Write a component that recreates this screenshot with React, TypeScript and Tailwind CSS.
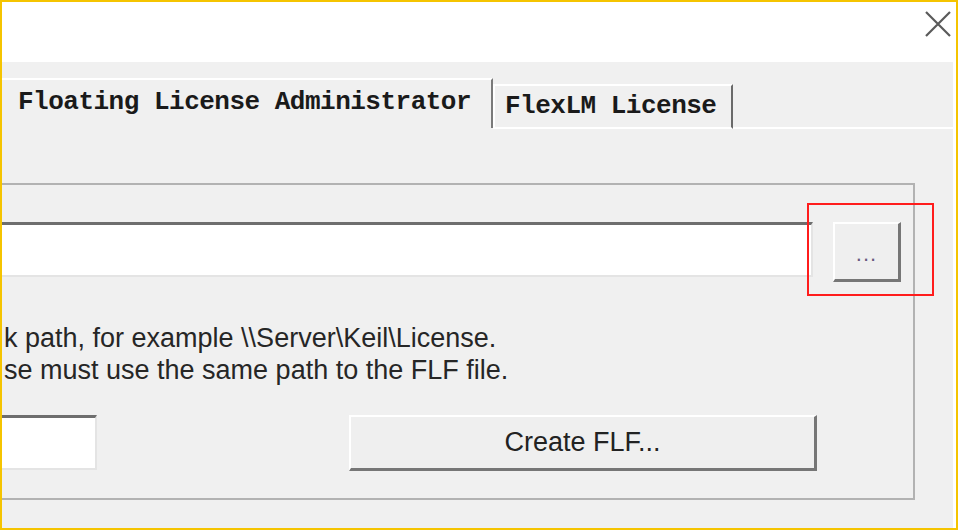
const ui = "font-['Liberation_Sans',Arial,sans-serif]";
const mono = "font-['Liberation_Mono','Courier_New',monospace]";

function CloseIcon() {
  return (
    <svg width="28" height="26" viewBox="0 0 28 26" className="block">
      <path d="M2 1 L26 25 M26 1 L2 25" stroke="#5a5a5a" strokeWidth="2.2" fill="none" />
    </svg>
  );
}

export default function App() {
  return (
    <div className="w-[961px] h-[531px] bg-white">
      <div className="w-[958px] h-[530px] border-2 border-[#f5c400] flex flex-col bg-white">
        {/* title strip */}
        <div className="h-[60px] flex justify-end items-start pt-[9px] pr-[4px]">
          <CloseIcon />
        </div>

        <div className="flex-1 bg-[#f0f0f0] mr-[3px] flex flex-col">
          {/* tabs */}
          <div className="h-[66px] flex items-end">
            <div
              className={`w-[491px] h-[50px] border-t-2 border-t-white border-r-2 border-r-[#7a7a7a] pl-[16px] pt-[7px] ${mono} font-bold text-[26px] leading-[30px] tracking-[-0.5px] text-[#1a1a1a]`}
            >
              Floating License Administrator
            </div>
            <div
              className={`w-[240px] h-[45px] border-t-2 border-l-2 border-white border-r-2 border-r-[#6a6a6a] border-b-2 border-b-white pl-[10px] pt-[5px] ${mono} font-bold text-[26px] leading-[30px] tracking-[-0.5px] text-[#1a1a1a] mb-[-1px]`}
            >
              FlexLM License
            </div>
            <div className="flex-1 h-[2px] bg-white mb-[-1px]" />
          </div>

          {/* group box */}
          <div className="mt-[55px] w-[913px] border-t-2 border-r-2 border-b-2 border-[#b2b2b2] pb-[27px]">
            <div className="mt-[37px] flex items-start">
              <div className="w-[811px] h-[55px] bg-white border-t-[3px] border-t-[#6e6e6e] border-r-2 border-r-[#e4e4e4] border-b-2 border-b-[#e4e4e4]" />
              <div className="relative ml-[20px]">
                <div
                  className={`w-[68px] h-[60px] bg-[#efefef] border-t-2 border-l-2 border-white border-r-[3px] border-b-[3px] border-r-[#767676] border-b-[#767676] flex items-center justify-center pt-[4px] ${ui} text-[22px] text-[#6a5a80] tracking-[1px]`}
                >
                  ...
                </div>
                <div className="absolute left-[-26px] top-[-19px] w-[127px] h-[93px] border-2 border-[#ff1c1c]" />
              </div>
            </div>

            <div className={`mt-[40px] pl-[2px] ${ui} text-[27px] leading-[32px] text-[#262626]`}>
              <div>k path, for example \\Server\Keil\License.</div>
              <div>se must use the same path to the FLF file.</div>
            </div>

            <div className="mt-[29px] flex items-start">
              <div className="w-[95px] h-[55px] bg-white border-t-[3px] border-t-[#6e6e6e] border-r-2 border-r-[#e4e4e4] border-b-2 border-b-[#e4e4e4]" />
              <div
                className={`ml-[252px] w-[468px] h-[56px] bg-[#efefef] border-t-2 border-l-2 border-white border-r-[3px] border-b-[3px] border-r-[#767676] border-b-[#767676] flex items-center justify-center ${ui} text-[27px] text-[#222]`}
              >
                Create FLF...
              </div>
            </div>
          </div>
        </div>
      </div>
    </div>
  );
}
